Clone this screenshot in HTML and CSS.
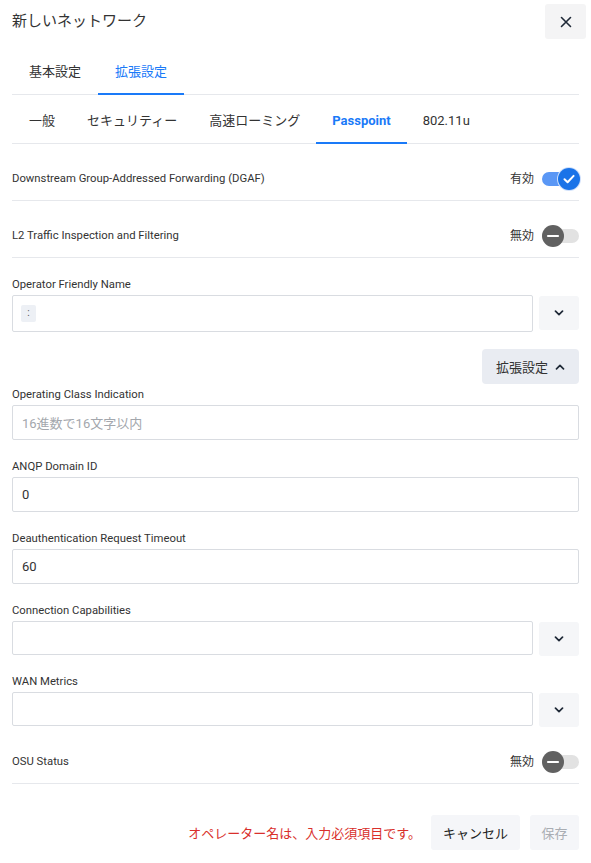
FILE: index.html
```html
<!DOCTYPE html>
<html lang="ja">
<head>
<meta charset="utf-8">
<title>新しいネットワーク</title>
<link rel="stylesheet" href="styles.css">
</head>
<body>
<div class="dialog">
  <div class="header">
    <div class="title">新しいネットワーク</div>
    <button class="close" aria-label="close">
      <svg width="12" height="12" viewBox="0 0 12 12"><path d="M1.5 1.5L10.5 10.5M10.5 1.5L1.5 10.5" stroke="#1f2937" stroke-width="1.6" stroke-linecap="round"/></svg>
    </button>
  </div>

  <div class="tabs">
    <div class="tab">基本設定</div>
    <div class="tab active">拡張設定</div>
  </div>

  <div class="tabs sub">
    <div class="tab">一般</div>
    <div class="tab">セキュリティー</div>
    <div class="tab">高速ローミング</div>
    <div class="tab active bold">Passpoint</div>
    <div class="tab">802.11u</div>
  </div>

  <div class="row">
    <div class="row-label">Downstream Group-Addressed Forwarding (DGAF)</div>
    <div class="switch">
      <span class="switch-text">有効</span>
      <span class="toggle on">
        <span class="track"></span>
        <span class="knob">
          <svg width="22" height="22" viewBox="0 0 22 22"><path d="M6.5 11.3L9.6 14.3L15.6 7.9" fill="none" stroke="#fff" stroke-width="2" stroke-linecap="round" stroke-linejoin="round"/></svg>
        </span>
      </span>
    </div>
  </div>

  <div class="row">
    <div class="row-label">L2 Traffic Inspection and Filtering</div>
    <div class="switch">
      <span class="switch-text">無効</span>
      <span class="toggle off">
        <span class="track"></span>
        <span class="knob">
          <svg width="22" height="22" viewBox="0 0 22 22"><path d="M6 11H16" stroke="#fff" stroke-width="2.2" stroke-linecap="round"/></svg>
        </span>
      </span>
    </div>
  </div>

  <div class="field first">
    <div class="label">Operator Friendly Name</div>
    <div class="input-row">
      <div class="input tall"><span class="chip">:</span></div>
      <button class="drop">
        <svg width="10" height="6" viewBox="0 0 10 6"><path d="M1.5 1.2L5 4.6L8.5 1.2" fill="none" stroke="#1f2937" stroke-width="1.7" stroke-linecap="round" stroke-linejoin="round"/></svg>
      </button>
    </div>
  </div>

  <div class="expand-wrap">
    <button class="expand">拡張設定
      <svg width="10" height="6" viewBox="0 0 10 6"><path d="M1.5 4.8L5 1.4L8.5 4.8" fill="none" stroke="#1f2937" stroke-width="1.7" stroke-linecap="round" stroke-linejoin="round"/></svg>
    </button>
  </div>

  <div class="field tight">
    <div class="label">Operating Class Indication</div>
    <div class="input placeholder">16進数で16文字以内</div>
  </div>

  <div class="field">
    <div class="label">ANQP Domain ID</div>
    <div class="input">0</div>
  </div>

  <div class="field">
    <div class="label">Deauthentication Request Timeout</div>
    <div class="input">60</div>
  </div>

  <div class="field">
    <div class="label">Connection Capabilities</div>
    <div class="input-row">
      <div class="input sel"></div>
      <button class="drop">
        <svg width="10" height="6" viewBox="0 0 10 6"><path d="M1.5 1.2L5 4.6L8.5 1.2" fill="none" stroke="#1f2937" stroke-width="1.7" stroke-linecap="round" stroke-linejoin="round"/></svg>
      </button>
    </div>
  </div>

  <div class="field wan">
    <div class="label">WAN Metrics</div>
    <div class="input-row">
      <div class="input sel"></div>
      <button class="drop">
        <svg width="10" height="6" viewBox="0 0 10 6"><path d="M1.5 1.2L5 4.6L8.5 1.2" fill="none" stroke="#1f2937" stroke-width="1.7" stroke-linecap="round" stroke-linejoin="round"/></svg>
      </button>
    </div>
  </div>

  <div class="row">
    <div class="row-label">OSU Status</div>
    <div class="switch">
      <span class="switch-text">無効</span>
      <span class="toggle off">
        <span class="track"></span>
        <span class="knob">
          <svg width="22" height="22" viewBox="0 0 22 22"><path d="M6 11H16" stroke="#fff" stroke-width="2.2" stroke-linecap="round"/></svg>
        </span>
      </span>
    </div>
  </div>

  <div class="footer">
    <span class="error">オペレーター名は、入力必須項目です。</span>
    <button class="btn">キャンセル</button>
    <button class="btn disabled">保存</button>
  </div>
</div>
</body>
</html>
```

FILE: styles.css
```css
* { box-sizing: border-box; }
html, body { margin: 0; padding: 0; background: #fff; }
body {
  font-family: Roboto, "Noto Sans CJK JP", sans-serif;
  color: #333;
  width: 591px;
}
button { font-family: inherit; border: 0; cursor: pointer; }

.dialog { padding: 0 12px; }

.header {
  display: flex;
  justify-content: space-between;
  align-items: flex-start;
  height: 44px;
  padding-top: 4px;
  margin-right: -7px;
}
.title {
  margin-top: 5px;
  font-size: 15px;
  line-height: 24px;
  color: #333;
}
.close {
  width: 41px;
  height: 35px;
  background: #f4f4f5;
  border-radius: 3px;
  display: flex;
  align-items: center;
  justify-content: center;
}

.tabs {
  display: flex;
  border-bottom: 1px solid #e6e8ec;
}
.tab {
  padding: 20px 17px 13px;
  font-size: 13px;
  line-height: 16px;
  color: #333;
  border-bottom: 2px solid transparent;
  margin-bottom: -1px;
  white-space: nowrap;
}
.tabs.sub .tab { padding: 18px 16px 13px; }
.tabs.sub .tab:first-child { padding-left: 17px; }
.tab.active { color: #1a7af8; border-bottom-color: #1a7af8; }
.tab.bold { font-weight: 700; }

.row {
  display: flex;
  align-items: center;
  justify-content: space-between;
  height: 57px;
  padding: 26px 0 12px;
  border-bottom: 1px solid #e6e8ec;
}
.row-label { font-size: 11.3px; line-height: 18px; color: #333; }
.switch { display: flex; align-items: center; gap: 8px; }
.switch-text { font-size: 12px; line-height: 18px; color: #333; }
.toggle {
  position: relative;
  width: 37px;
  height: 18px;
  display: flex;
  align-items: center;
}
.track { width: 100%; height: 14px; border-radius: 7px; }
.knob {
  position: absolute;
  top: -2px;
  width: 22px;
  height: 22px;
  border-radius: 50%;
  display: flex;
}
.toggle.on .track { background: #5a97f5; }
.toggle.on .knob { right: -1px; background: #1a73e8; box-shadow: 0 0 0 1px #cfe0fb; }
.toggle.off .track { background: #e2e2e2; }
.toggle.off .knob { left: 0; background: #616161; }

.field { margin-top: 18px; }
.field.tight { margin-top: 2px; }
.field.wan { margin-top: 17px; }
.label {
  font-size: 11.3px;
  line-height: 16px;
  color: #333;
  padding-top: 1px;
  margin-bottom: 2px;
}
.input-row { display: flex; gap: 6px; align-items: flex-start; }
.input {
  flex: 1;
  height: 35px;
  border: 1px solid #d9dce1;
  border-radius: 2px;
  padding: 0 9px;
  display: flex;
  align-items: center;
  font-size: 13px;
  color: #333;
}
.input.tall { height: 37px; padding: 0 8px; }
.input.sel { height: 34px; }
.input.placeholder { color: #a3a7ad; }
.chip {
  width: 15px;
  height: 17px;
  background: #edf0f5;
  border-radius: 2px;
  font-size: 10px;
  line-height: 16px;
  text-align: center;
  color: #555;
}
.drop {
  width: 40px;
  height: 34px;
  margin-top: 1px;
  background: #f5f6f8;
  border-radius: 3px;
  display: flex;
  align-items: center;
  justify-content: center;
}

.expand-wrap { display: flex; justify-content: flex-end; margin-top: 17px; }
.expand {
  height: 35px;
  width: 97px;
  background: #e9ecf2;
  border-radius: 4px;
  font-size: 13px;
  color: #333;
  display: flex;
  align-items: center;
  justify-content: center;
  gap: 7px;
}

.footer {
  display: flex;
  justify-content: flex-end;
  align-items: center;
  margin-top: 31px;
}
.error { font-size: 13px; color: #d9302c; margin-right: 10px; }
.btn {
  height: 35px;
  padding: 0 12px;
  background: #f5f6f9;
  border-radius: 3px;
  font-size: 13px;
  color: #222;
}
.btn.disabled { margin-left: 10px; color: #a9adb3; width: 49px; padding: 0; }
```
